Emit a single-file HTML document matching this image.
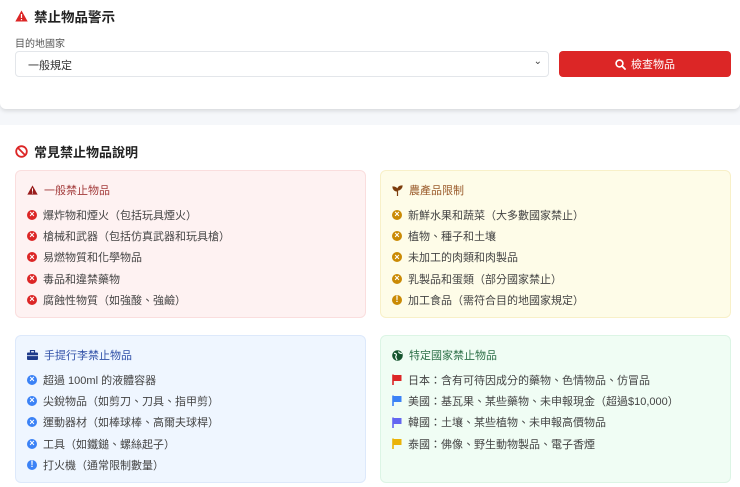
<!DOCTYPE html>
<html><head><meta charset="utf-8"><style>
*{box-sizing:border-box;margin:0;padding:0}
body{width:740px;height:487px;overflow:hidden;background:#f5f7fa;font-family:"Liberation Sans","Noto Sans CJK TC",sans-serif;color:#444;position:relative}
.top{position:absolute;left:0;top:0;width:740px;height:109px;background:#fff;box-shadow:0 2px 4px rgba(0,0,0,.12);border-radius:0 0 6px 6px}
.h1{position:absolute;left:15px;top:6px;font-size:13.5px;font-weight:bold;color:#222;display:flex;align-items:center;gap:6px}
.lbl{position:absolute;left:15px;top:35px;font-size:10px;color:#555}
.sel{position:absolute;left:15px;top:51px;width:534px;height:26px;border:1px solid #e3e6ea;border-radius:4px;font-size:11px;padding:5px 12px;color:#333}
.sel .ch{position:absolute;right:6px;top:4px;font-size:10px;color:#444}
.btn{position:absolute;left:559px;top:51px;width:172px;height:26px;background:#dc2626;border-radius:4px;color:#fff;font-size:11px;display:flex;align-items:center;justify-content:center;gap:5px}
.sec{position:absolute;left:0;top:125px;width:740px;height:362px;background:#fff}
.h2{position:absolute;left:15px;top:142px;font-size:13px;font-weight:bold;color:#222;display:flex;align-items:center;gap:6px}
.card{position:absolute;width:351px;border-radius:6px;padding:12px 11px 0 11px;font-size:11px}
.card .t{display:flex;align-items:center;gap:6px;height:14px;margin-bottom:7px}
.card .i{display:flex;align-items:center;gap:6px;height:21.3px}
.c{width:10px;height:10px;border-radius:50%;display:inline-flex;align-items:center;justify-content:center;color:#fff;font-size:9px;font-weight:bold;flex:none;line-height:1}
</style></head><body>
<div class="top">
<div class="h1"><svg width="13" height="12" viewBox="0 0 13 12"><path d="M6.5 0.5L12.7 11.5H0.3Z" fill="#dc2626"/><rect x="5.9" y="4" width="1.2" height="4" fill="#fff"/><rect x="5.9" y="9" width="1.2" height="1.2" fill="#fff"/></svg>禁止物品警示</div>
<div class="lbl">目的地國家</div>
<div class="sel">一般規定<span class="ch">⌄</span></div>
<div class="btn"><svg width="11" height="11" viewBox="0 0 11 11"><circle cx="4.5" cy="4.5" r="3.4" fill="none" stroke="#fff" stroke-width="1.6"/><path d="M7 7L10 10" stroke="#fff" stroke-width="1.8" stroke-linecap="round"/></svg>檢查物品</div>
</div>
<div class="sec"></div>
<div class="h2"><svg width="13" height="13" viewBox="0 0 13 13"><circle cx="6.5" cy="6.5" r="5.3" fill="none" stroke="#dc2626" stroke-width="1.8"/><path d="M2.8 2.8L10.2 10.2" stroke="#dc2626" stroke-width="1.8"/></svg>常見禁止物品說明</div>

<div class="card" style="left:15px;top:170px;height:148px;background:#fef2f2;border:1px solid #fadede">
<div class="t" style="color:#a33b3b"><svg width="11" height="10" viewBox="0 0 13 12"><path d="M6.5 0.5L12.7 11.5H0.3Z" fill="#991b1b"/><rect x="5.9" y="4" width="1.2" height="4" fill="#fff"/><rect x="5.9" y="9" width="1.2" height="1.2" fill="#fff"/></svg>一般禁止物品</div>
<div class="i"><span class="c" style="background:#dc2626">×</span>爆炸物和煙火（包括玩具煙火）</div>
<div class="i"><span class="c" style="background:#dc2626">×</span>槍械和武器（包括仿真武器和玩具槍）</div>
<div class="i"><span class="c" style="background:#dc2626">×</span>易燃物質和化學物品</div>
<div class="i"><span class="c" style="background:#dc2626">×</span>毒品和違禁藥物</div>
<div class="i"><span class="c" style="background:#dc2626">×</span>腐蝕性物質（如強酸、強鹼）</div>
</div>

<div class="card" style="left:380px;top:170px;height:148px;background:#fefce8;border:1px solid #f8f0c8">
<div class="t" style="color:#9a5a2a"><svg width="11" height="11" viewBox="0 0 11 11"><path d="M5.5 11V5M5.5 6C5.5 3 3 2 1 2C1 4 2.5 6 5.5 6ZM5.5 5C5.5 3 7 1 10 1C10 3 8 5 5.5 5Z" fill="#7c3d0c" stroke="#7c3d0c" stroke-width="1.2"/></svg>農產品限制</div>
<div class="i"><span class="c" style="background:#ca8a04">×</span>新鮮水果和蔬菜（大多數國家禁止）</div>
<div class="i"><span class="c" style="background:#ca8a04">×</span>植物、種子和土壤</div>
<div class="i"><span class="c" style="background:#ca8a04">×</span>未加工的肉類和肉製品</div>
<div class="i"><span class="c" style="background:#ca8a04">×</span>乳製品和蛋類（部分國家禁止）</div>
<div class="i"><span class="c" style="background:#ca8a04">!</span>加工食品（需符合目的地國家規定）</div>
</div>

<div class="card" style="left:15px;top:335px;height:148px;background:#eff6ff;border:1px solid #dde9fb">
<div class="t" style="color:#3050a8"><svg width="11" height="10" viewBox="0 0 11 10"><rect x="3.5" y="0.5" width="4" height="2.5" fill="none" stroke="#1e3a8a" stroke-width="1.2"/><rect x="0" y="2.5" width="11" height="7.5" rx="1" fill="#1e3a8a"/><rect x="0" y="5.3" width="11" height="0.8" fill="#eff6ff"/></svg>手提行李禁止物品</div>
<div class="i"><span class="c" style="background:#3b82f6">×</span>超過 100ml 的液體容器</div>
<div class="i"><span class="c" style="background:#3b82f6">×</span>尖銳物品（如剪刀、刀具、指甲剪）</div>
<div class="i"><span class="c" style="background:#3b82f6">×</span>運動器材（如棒球棒、高爾夫球桿）</div>
<div class="i"><span class="c" style="background:#3b82f6">×</span>工具（如鐵鎚、螺絲起子）</div>
<div class="i"><span class="c" style="background:#3b82f6">!</span>打火機（通常限制數量）</div>
</div>

<div class="card" style="left:380px;top:335px;height:148px;background:#f0fdf4;border:1px solid #dcf5e5">
<div class="t" style="color:#2d7048"><svg width="11" height="11" viewBox="0 0 11 11"><circle cx="5.5" cy="5.5" r="5.3" fill="#14532d"/><path d="M2 3.5C4 3 5 4.5 4 6C3 7 4.5 8.5 5 10M6.5 1.5C7 3 8.5 3.5 10 3.5" stroke="#f0fdf4" stroke-width="1.2" fill="none"/></svg>特定國家禁止物品</div>
<div class="i"><svg width="10" height="11" viewBox="0 0 10 11"><path d="M1 0.5V11" stroke="#dc2626" stroke-width="1.6"/><path d="M1.5 1H9.5V7H1.5Z" fill="#dc2626"/></svg>日本：含有可待因成分的藥物、色情物品、仿冒品</div>
<div class="i"><svg width="10" height="11" viewBox="0 0 10 11"><path d="M1 0.5V11" stroke="#3b82f6" stroke-width="1.6"/><path d="M1.5 1H9.5V7H1.5Z" fill="#3b82f6"/></svg>美國：基瓦果、某些藥物、未申報現金（超過$10,000）</div>
<div class="i"><svg width="10" height="11" viewBox="0 0 10 11"><path d="M1 0.5V11" stroke="#6366f1" stroke-width="1.6"/><path d="M1.5 1H9.5V7H1.5Z" fill="#6366f1"/></svg>韓國：土壤、某些植物、未申報高價物品</div>
<div class="i"><svg width="10" height="11" viewBox="0 0 10 11"><path d="M1 0.5V11" stroke="#eab308" stroke-width="1.6"/><path d="M1.5 1H9.5V7H1.5Z" fill="#eab308"/></svg>泰國：佛像、野生動物製品、電子香煙</div>
</div>
</body></html>
